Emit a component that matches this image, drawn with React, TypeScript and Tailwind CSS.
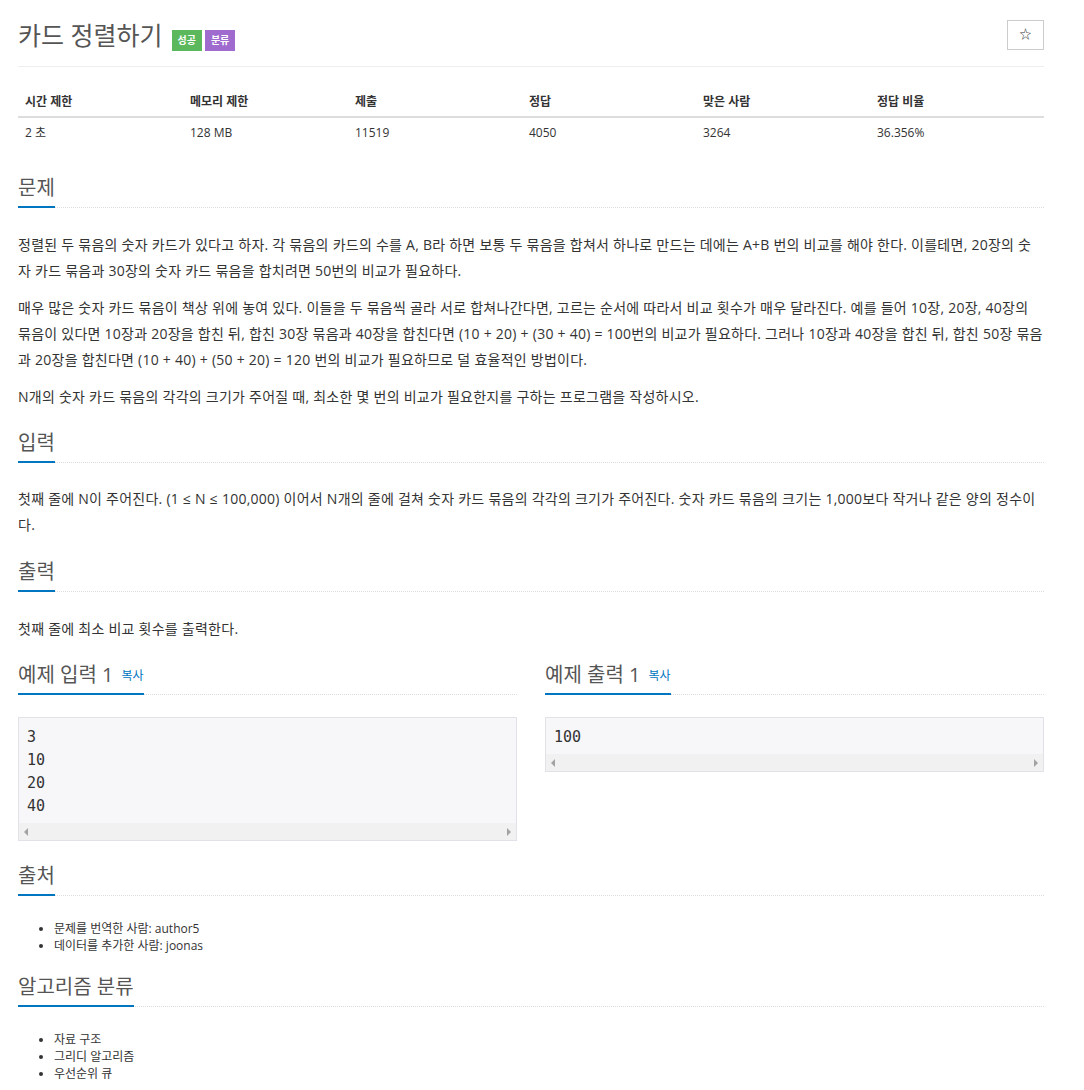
import React from 'react';

const font = { fontFamily: '"Open Sans", "Noto Sans CJK KR", sans-serif' };

const SectionTitle: React.FC<{ children: React.ReactNode; extra?: React.ReactNode }> = ({ children, extra }) => (
  <div className="border-b border-dotted border-[#dddddd]">
    <h2 className="inline-block -mb-px border-b-2 border-[#0076c0] pb-[4px] text-[20px] leading-[28px] font-normal text-[#555]">
      {children}
      {extra}
    </h2>
  </div>
);

const ScrollBar: React.FC = () => (
  <div className="flex h-[17px] items-center justify-between bg-[#f1f1f1] px-[4px]">
    <svg width="6" height="8" viewBox="0 0 6 8"><path d="M5 0 L1 4 L5 8 Z" fill="#a3a3a3" /></svg>
    <svg width="6" height="8" viewBox="0 0 6 8"><path d="M1 0 L5 4 L1 8 Z" fill="#a3a3a3" /></svg>
  </div>
);

const Sample: React.FC<{ title: string; lines: string[] }> = ({ title, lines }) => (
  <div>
    <SectionTitle extra={<a className="ml-[8px] align-[2px] text-[12px] leading-[0] text-[#0076c0]">복사</a>}>{title}</SectionTitle>
    <div className="mt-[22px] border border-[#e1e1e8] bg-[#f7f7f9]">
      <pre className="px-[8px] pt-[8px] pb-[5px] text-[15px] leading-[23px] text-[#333]" style={{ fontFamily: '"DejaVu Sans Mono", monospace' }}>
        {lines.join('\n')}
      </pre>
      <ScrollBar />
    </div>
  </div>
);

const stats = [
  ['시간 제한', '2 초', 'w-[165px]'],
  ['메모리 제한', '128 MB', 'w-[165px]'],
  ['제출', '11519', 'w-[174px]'],
  ['정답', '4050', 'w-[174px]'],
  ['맞은 사람', '3264', 'w-[174px]'],
  ['정답 비율', '36.356%', ''],
];

export default function App() {
  return (
    <div className="min-h-screen bg-white text-[#333]" style={font}>
      <div className="mx-[18px] flex w-[1026px] flex-col pt-[18px]">
        <header className="flex items-center justify-between border-b border-[#eeeeee] pb-[15px]">
          <div className="flex items-center">
            <h1 className="text-[25px] leading-[30px] font-normal text-[#555]">카드 정렬하기</h1>
            <div className="mt-[12px] ml-[9px] flex gap-[3px]">
              <span className="bg-[#5cb85c] px-[6px] py-[4px] text-[10px] leading-[13px] font-bold text-white">성공</span>
              <span className="bg-[#9f6bce] px-[6px] py-[4px] text-[10px] leading-[13px] font-bold text-white">분류</span>
            </div>
          </div>
          <button className="flex h-[30px] w-[37px] items-center justify-center border border-[#cccccc] bg-white text-[12px] text-[#333]">☆</button>
        </header>

        <table className="mt-[20px] w-full text-left text-[12px]">
          <thead>
            <tr className="border-b-2 border-[#dddddd]">
              {stats.map(([h, , w]) => (
                <th key={h} className={`${w} px-[7px] h-[30px] font-bold text-[#333]`}>{h}</th>
              ))}
            </tr>
          </thead>
          <tbody>
            <tr>
              {stats.map(([h, v]) => (
                <td key={h} className="px-[7px] h-[30px] text-[#333]">{v}</td>
              ))}
            </tr>
          </tbody>
        </table>

        <section className="mt-[27px]">
          <SectionTitle>문제</SectionTitle>
          <div className="mt-[24px] text-[14px] leading-[26px] tracking-[0.25px]">
            <p className="mb-[11px]">정렬된 두 묶음의 숫자 카드가 있다고 하자. 각 묶음의 카드의 수를 A, B라 하면 보통 두 묶음을 합쳐서 하나로 만드는 데에는 A+B 번의 비교를 해야 한다. 이를테면, 20장의 숫자 카드 묶음과 30장의 숫자 카드 묶음을 합치려면 50번의 비교가 필요하다.</p>
            <p className="mb-[11px]">매우 많은 숫자 카드 묶음이 책상 위에 놓여 있다. 이들을 두 묶음씩 골라 서로 합쳐나간다면, 고르는 순서에 따라서 비교 횟수가 매우 달라진다. 예를 들어 10장, 20장, 40장의 묶음이 있다면 10장과 20장을 합친 뒤, 합친 30장 묶음과 40장을 합친다면 (10 + 20) + (30 + 40) = 100번의 비교가 필요하다. 그러나 10장과 40장을 합친 뒤, 합친 50장 묶음과 20장을 합친다면 (10 + 40) + (50 + 20) = 120 번의 비교가 필요하므로 덜 효율적인 방법이다.</p>
            <p>N개의 숫자 카드 묶음의 각각의 크기가 주어질 때, 최소한 몇 번의 비교가 필요한지를 구하는 프로그램을 작성하시오.</p>
          </div>
        </section>

        <section className="mt-[19px]">
          <SectionTitle>입력</SectionTitle>
          <div className="mt-[23px] text-[14px] leading-[26px] tracking-[0.25px]">
            <p>첫째 줄에 N이 주어진다. (1 ≤ N ≤ 100,000) 이어서 N개의 줄에 걸쳐 숫자 카드 묶음의 각각의 크기가 주어진다. 숫자 카드 묶음의 크기는 1,000보다 작거나 같은 양의 정수이다.</p>
          </div>
        </section>

        <section className="mt-[20px]">
          <SectionTitle>출력</SectionTitle>
          <div className="mt-[24px] text-[14px] leading-[26px] tracking-[0.25px]">
            <p>첫째 줄에 최소 비교 횟수를 출력한다.</p>
          </div>
        </section>

        <div className="mt-[19px] grid grid-cols-2 gap-[28px]">
          <Sample title="예제 입력 1" lines={['3', '10', '20', '40']} />
          <Sample title="예제 출력 1" lines={['100']} />
        </div>

        <section className="mt-[21px]">
          <SectionTitle>출처</SectionTitle>
          <ul className="mt-[24px] list-disc pl-[36px] text-[12px] leading-[17px]">
            <li>문제를 번역한 사람: author5</li>
            <li>데이터를 추가한 사람: joonas</li>
          </ul>
        </section>

        <section className="mt-[19px] pb-[20px]">
          <SectionTitle>알고리즘 분류</SectionTitle>
          <ul className="mt-[24px] list-disc pl-[36px] text-[12px] leading-[17px]">
            <li>자료 구조</li>
            <li>그리디 알고리즘</li>
            <li>우선순위 큐</li>
          </ul>
        </section>
      </div>
    </div>
  );
}
